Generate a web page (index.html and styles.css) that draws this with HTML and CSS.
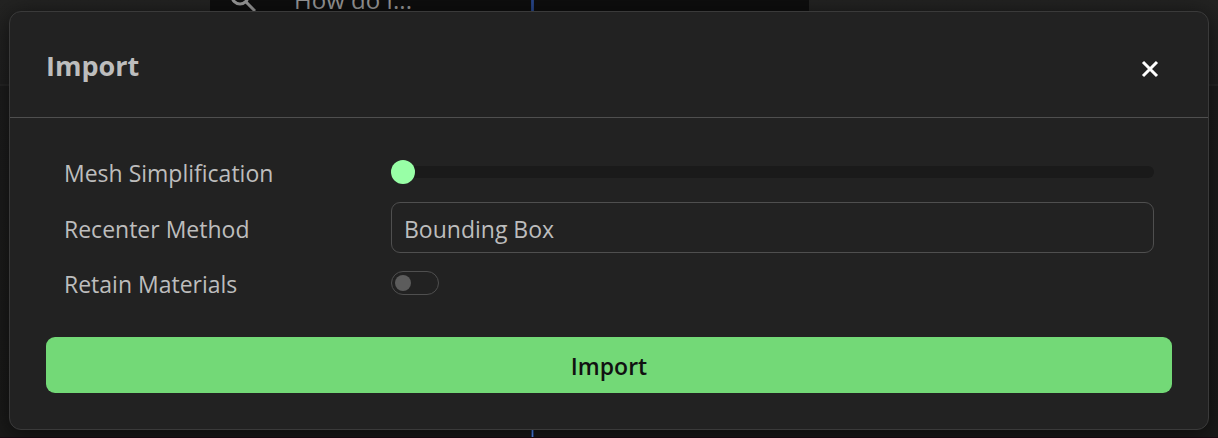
FILE: index.html
```html
<!DOCTYPE html>
<html lang="en">
<head>
    <meta charset="UTF-8">
    <meta name="viewport" content="width=device-width, initial-scale=1.0">
    <title>Import</title>
    <link rel="stylesheet" href="styles.css">
</head>
<body>

    <!-- Workspace behind the dialog -->
    <div class="workspace">
        <div class="search">
            <svg class="search-icon" width="28" height="28" viewBox="0 0 28 28" fill="none" stroke="currentColor" stroke-width="3">
                <circle cx="10" cy="12" r="8"/>
                <path d="M15 17 L25 27"/>
            </svg>
            <span>How do I...</span>
        </div>
        <div class="axis"></div>
    </div>

    <form class="dialog" role="dialog" aria-labelledby="dialog-title">
        <div class="dialog-header">
            <h2 id="dialog-title">Import</h2>
            <button type="button" class="close" aria-label="Close">
                <svg width="18" height="18" viewBox="0 0 18 18" fill="none" stroke="currentColor" stroke-width="3">
                    <path d="M2 2 L16 16 M16 2 L2 16"/>
                </svg>
            </button>
        </div>

        <div class="dialog-body">
            <div class="fields">
                <label for="simplify">Mesh Simplification</label>
                <input type="range" id="simplify" class="slider" min="0" max="100" value="0">

                <label for="recenter">Recenter Method</label>
                <select id="recenter" class="select">
                    <option>Bounding Box</option>
                </select>

                <label for="materials">Retain Materials</label>
                <input type="checkbox" id="materials" class="toggle">
            </div>

            <button type="submit" class="btn">Import</button>
        </div>
    </form>

</body>
</html>
```
FILE: styles.css
```css
* {
    box-sizing: border-box;
}
body {
    margin: 0;
    background: #1d1d1c;
    color: #bdbdbd;
    font-family: "Open Sans", "Noto Sans", sans-serif;
    font-size: 23px;
    line-height: 24px;
}
.workspace {
    position: absolute;
    inset: 0;
    overflow: hidden;
    background: linear-gradient(#232322, #202020 84px, #262626 84px, #262626 86px, #1d1d1d 86px, #1a1a19);
    border-bottom: 1px solid #1a0b14;
}
.search {
    display: flex;
    align-items: flex-end;
    gap: 36px;
    width: 599px;
    height: 12px;
    margin-left: 210px;
    padding-left: 20px;
    background: #0e0e0e;
    color: #999;
}
.search span {
    font-size: 24px;
    line-height: 24px;
}
.axis {
    position: absolute;
    top: 0;
    bottom: 0;
    left: 531px;
    width: 3px;
    background: linear-gradient(#2a458c, #5a94ff);
    border: solid #24427f;
    border-width: 0 1px;
}
.dialog {
    position: relative;
    margin: 11px 9px 8px;
    background: #222;
    border: 1px solid #3a3a3a;
    border-radius: 12px;
    box-shadow: 0 4px 24px rgba(0, 0, 0, 0.6);
}
.dialog-header {
    display: flex;
    justify-content: space-between;
    align-items: center;
    padding: 36px 49px 33px 36px;
    border-bottom: 1px solid #4f4f4f;
}
.dialog-header h2 {
    margin: 0;
    font-size: 27px;
    font-weight: 700;
    line-height: 36px;
}
.close {
    display: flex;
    padding: 6px 0 0;
    background: none;
    border: none;
    color: #fff;
    cursor: pointer;
}
.dialog-body {
    padding: 42px 36px 36px;
}
.fields {
    display: grid;
    grid-template-columns: 30% 1fr;
    align-items: center;
    row-gap: 18px;
    padding: 0 18px;
    margin-bottom: 42px;
}
.fields label {
    padding-top: 2px;
    line-height: 22px;
}
.slider {
    appearance: none;
    width: 100%;
    height: 24px;
    margin: 0;
    background: none;
}
.slider::-webkit-slider-runnable-track {
    height: 12px;
    background: #1a1a1a;
    border-radius: 6px;
}
.slider::-webkit-slider-thumb {
    appearance: none;
    width: 24px;
    height: 24px;
    margin-top: -6px;
    background: #98ffa6;
    border-radius: 50%;
}
.select {
    appearance: none;
    width: 100%;
    height: 51px;
    padding: 2px 12px 0;
    background: #222;
    border: 1px solid #4f4f4f;
    border-radius: 9px;
    color: inherit;
    font: inherit;
    line-height: 36px;
}
.toggle {
    appearance: none;
    display: flex;
    align-items: center;
    width: 48px;
    height: 24px;
    margin: 0;
    padding: 0 3px;
    border: 1px solid #4f4f4f;
    border-radius: 12px;
}
.toggle::before {
    content: "";
    width: 16px;
    height: 16px;
    background: #5c5c5c;
    border-radius: 50%;
}
.toggle:checked::before {
    margin-left: auto;
    background: #98ffa6;
}
.btn {
    display: block;
    width: 100%;
    height: 56px;
    padding: 2px 0 0;
    background: #73d977;
    border: none;
    border-radius: 9px;
    color: #111;
    font: inherit;
    font-weight: 600;
    cursor: pointer;
}
```
